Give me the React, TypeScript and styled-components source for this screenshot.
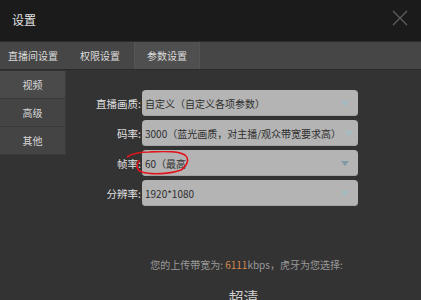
import styled, { createGlobalStyle } from "styled-components"

const GlobalStyle = createGlobalStyle`
  body {
    margin: 0;
    background: #333333;
    font-family: "Noto Sans CJK SC", "Noto Sans", sans-serif;
  }
`

const Window = styled.div`
  width: 421px;
  height: 300px;
  overflow: hidden;
  background: #333333;
  display: flex;
  flex-direction: column;
`

const TitleBar = styled.div`
  height: 41px;
  flex-shrink: 0;
  background: #1b1b1b;
  display: flex;
  align-items: center;
  justify-content: space-between;
  padding: 0 12px 2px 12px;
  box-sizing: border-box;
`

const Title = styled.div`
  color: #e2e2e2;
  font-size: 12px;
`

const CloseIcon = styled.svg`
  width: 16px;
  height: 16px;
  margin-right: 1px;
  margin-bottom: 4px;
`

const TabBar = styled.div`
  height: 27px;
  flex-shrink: 0;
  background: #464646;
  border-top: 1px solid #2c2c2c;
  border-bottom: 1px solid #2a2a2a;
  display: flex;
  align-items: stretch;
`

const Tab = styled.div<{ $active?: boolean }>`
  display: flex;
  align-items: center;
  justify-content: center;
  padding: 0 ${(p) => (p.$active ? "12px" : "10px")};
  color: #dcdcdc;
  font-size: 10px;
  background: ${(p) => (p.$active ? "#4f4f4f" : "transparent")};
  border-left: 1px solid ${(p) => (p.$active ? "#555" : "transparent")};
  border-right: 1px solid ${(p) => (p.$active ? "#555" : "transparent")};
  margin-left: ${(p) => (p.$active ? "3px" : "0")};

  &:first-child {
    padding-left: 8px;
    border-left: none;
  }
`

const Body = styled.div`
  flex: 1;
  display: flex;
  min-height: 0;
`

const Sidebar = styled.div`
  width: 65px;
  flex-shrink: 0;
  align-self: flex-start;
  margin-top: 1px;
  background: #444444;
  border-right: 1px solid #3a3a3a;
  display: flex;
  flex-direction: column;
`

const SideItem = styled.div<{ $active?: boolean }>`
  height: 27px;
  display: flex;
  align-items: center;
  justify-content: center;
  color: #d8d8d8;
  font-size: 10px;
  background: ${(p) => (p.$active ? "#4a4a4a" : "#444444")};
  border-bottom: 1px solid #393939;
`

const Content = styled.div`
  flex: 1;
  display: flex;
  flex-direction: column;
  padding-top: 20px;
`

const Form = styled.div`
  position: relative;
  display: flex;
  flex-direction: column;
  gap: 4px;
`

const Row = styled.div`
  display: flex;
  align-items: center;
`

const Label = styled.div`
  width: 75px;
  text-align: right;
  color: #e0e0e0;
  font-size: 10.5px;
  flex-shrink: 0;
`

const Select = styled.div`
  width: 216px;
  height: 26px;
  margin-left: 1px;
  box-sizing: border-box;
  background: #b4b4b4;
  border-radius: 4px;
  display: flex;
  align-items: center;
  justify-content: space-between;
  gap: 4px;
  padding: 0 9px 0 3px;
  color: #2e2e2e;
  font-size: 10px;
  white-space: nowrap;
  box-shadow: inset 0 -1px 0 #a4a4a4;
`

const Arrow = styled.span<{ $dark?: boolean }>`
  flex-shrink: 0;
  width: 0;
  height: 0;
  border-left: 4px solid transparent;
  border-right: 4px solid transparent;
  border-top: 5px solid ${(p) => (p.$dark ? "#7f9aa3" : "#a3bcc6")};
`

const Scribble = styled.svg`
  position: absolute;
  left: 61px;
  top: 61px;
  width: 70px;
  height: 30px;
  pointer-events: none;
`

const Note = styled.div`
  margin-top: 51px;
  text-align: center;
  color: #9a9a9a;
  font-size: 10px;
  padding-left: 6px;
`

const Speed = styled.span`
  color: #d98a4e;
`

const Quality = styled.div`
  margin-top: 14px;
  text-align: center;
  color: #d0d0d0;
  font-size: 15px;
`

const rows = [
  { label: "直播画质:", value: "自定义（自定义各项参数）" },
  { label: "码率:", value: "3000（蓝光画质，对主播/观众带宽要求高）" },
  { label: "帧率:", value: "60（最高", dark: true },
  { label: "分辨率:", value: "1920*1080" },
]

export default function App() {
  return (
    <>
      <GlobalStyle />
      <Window>
        <TitleBar>
          <Title>设置</Title>
          <CloseIcon viewBox="0 0 16 16">
            <path d="M1 1 L15 15 M15 1 L1 15" stroke="#5c5c5c" strokeWidth="1.4" />
          </CloseIcon>
        </TitleBar>
        <TabBar>
          <Tab>直播间设置</Tab>
          <Tab>权限设置</Tab>
          <Tab $active>参数设置</Tab>
        </TabBar>
        <Body>
          <Sidebar>
            <SideItem $active>视频</SideItem>
            <SideItem>高级</SideItem>
            <SideItem>其他</SideItem>
          </Sidebar>
          <Content>
            <Form>
              {rows.map((r) => (
                <Row key={r.label}>
                  <Label>{r.label}</Label>
                  <Select>
                    <span>{r.value}</span>
                    <Arrow $dark={r.dark} />
                  </Select>
                </Row>
              ))}
              <Scribble viewBox="0 0 70 30">
                <path
                  d="M0 6 C6 2 14 1 22 1 C36 0 52 0 58 4 C63 8 60 15 54 19 C44 23 24 24 15 21 C9 19 9 14 12 10"
                  fill="none"
                  stroke="#e0141b"
                  strokeWidth="1.6"
                  strokeLinecap="round"
                />
              </Scribble>
            </Form>
            <Note>
              您的上传带宽为: <Speed>6111</Speed>kbps，虎牙为您选择:
            </Note>
            <Quality>超清</Quality>
          </Content>
        </Body>
      </Window>
    </>
  )
}
